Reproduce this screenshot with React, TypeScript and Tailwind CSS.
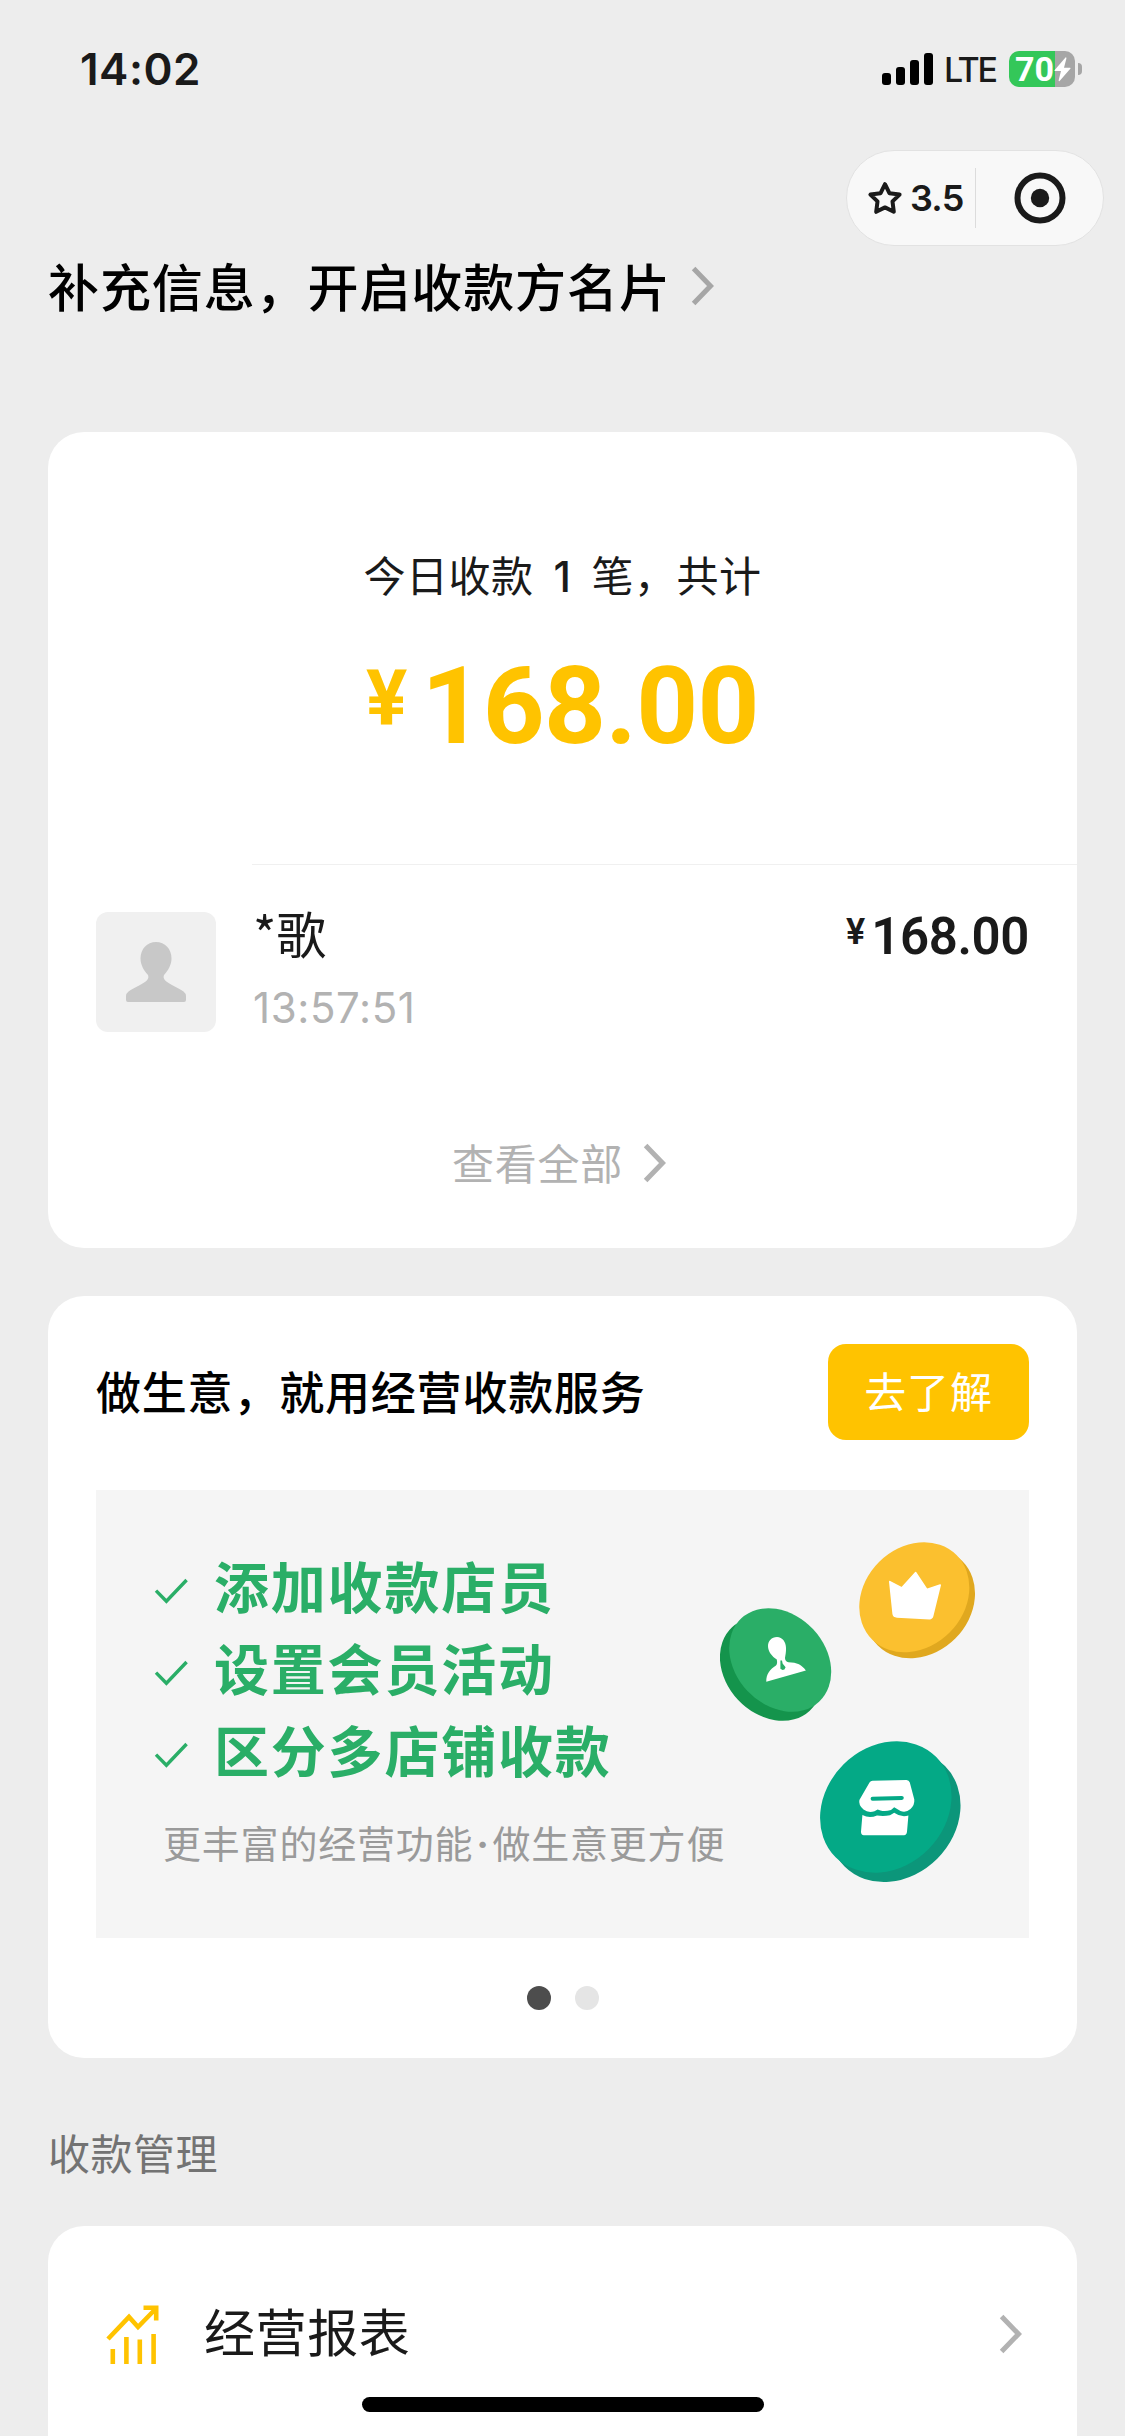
import React from 'react';
import clsx from 'clsx';

const FEATURES = ['添加收款店员', '设置会员活动', '区分多店铺收款'];

const Chevron: React.FC<{ className?: string }> = ({ className }) => (
  <svg viewBox="0 0 24 40" className={clsx('h-10 w-6 shrink-0', className)} fill="none" stroke="currentColor" strokeWidth="5">
    <path d="M2.6 2.6 L19.5 20 L2.6 37.4" />
  </svg>
);

const StatusBar: React.FC = () => (
  <div className="flex h-[138px] shrink-0 items-center justify-between pr-[43px] pl-20 font-['Inter',sans-serif]">
    <span className="text-[44px] leading-none font-semibold tracking-[0.5px]">14:02</span>

    <div className="flex items-center">
      <svg viewBox="0 0 52 32" className="h-8 w-[52px]">
        <rect x="0" y="20" width="9" height="12" rx="3" />
        <rect x="14" y="14" width="9" height="18" rx="3" />
        <rect x="28" y="7" width="9" height="25" rx="3" />
        <rect x="42" y="0" width="9" height="32" rx="3" />
      </svg>
      <span className="mt-0.5 ml-2.5 w-[65px] text-[34px] leading-none font-medium tracking-[-2.4px]">LTE</span>
      <div className="flex h-9 w-[66px] items-center rounded-[10px] bg-linear-to-r from-[#34c759] from-70% to-[#a6a6a6] to-70% pl-[6px] text-white">
        <span className="w-[39px] font-['Roboto',sans-serif] text-[34px] leading-9 font-bold">70</span>
        <svg viewBox="0 0 17 25" className="h-[25px] w-[17px] shrink-0" fill="currentColor">
          <path d="M11.5 0.5 L0.5 13.2 Q0.2 14 1 14 H7 L4.6 23.6 Q4.8 24.8 5.6 24 L16.5 11.6 Q16.8 10.8 16 10.8 H10 L12.4 1.4 Q12.4 0 11.5 0.5 Z" />
        </svg>
      </div>
      <div className="ml-[3px] h-3 w-1 rounded-r-full bg-[#a6a6a6]" />
    </div>
  </div>
);

const Capsule: React.FC = () => (
  <div className="mr-[21px] ml-auto flex h-24 w-[258px] items-center rounded-full border border-[#e2e2e2] bg-[#f8f8f8] text-[#1a1a1a]">
    <svg viewBox="0 0 36 34" className="ml-5 h-[34px] w-9" fill="none" stroke="currentColor" strokeWidth="4" strokeLinejoin="round">
      <path d="M18 3.2 L22.4 12.2 L32.6 13.6 L25.5 20.4 L26.8 30.8 L18 26.4 L9.2 30.8 L10.5 20.4 L3.4 13.6 L13.6 12.2 Z" />
    </svg>
    <span className="ml-[7px] w-[57px] font-['Inter',sans-serif] text-[36px] leading-none font-semibold tracking-[-0.8px]">3.5</span>
    <div className="ml-2 h-[60px] w-px bg-[#dcdcdc]" />
    <svg viewBox="0 0 52 52" className="ml-[38px] h-[52px] w-[52px]">
      <circle cx="26" cy="26" r="22.5" fill="none" stroke="currentColor" strokeWidth="6" />
      <circle cx="26" cy="26" r="9.2" fill="currentColor" />
    </svg>
  </div>
);

const Avatar: React.FC = () => (
  <div className="flex size-[120px] shrink-0 items-center justify-center rounded-[12px] bg-[#f0f0f0]">
    <svg viewBox="0 0 60 60" className="size-[60px]" fill="#c8c8c8">
      <path d="M30 0 C39 0 45.5 7 45.5 16.5 C45.5 23 42 28.5 38.4 32.5 Q36.6 35.2 38.8 38 C41 41 52 45.5 57.5 49.5 Q60 51.5 60 54 V58 Q60 60 58 60 H2 Q0 60 0 58 V54 Q0 51.5 2.5 49.5 C8 45.5 19 41 21.2 38 Q23.4 35.2 21.6 32.5 C18 28.5 14.5 23 14.5 16.5 C14.5 7 21 0 30 0 Z" />
    </svg>
  </div>
);

const TodayCard: React.FC = () => (
  <section className="flex h-[816px] shrink-0 flex-col rounded-[36px] bg-white pt-28">
    <p className="text-center text-[42px] leading-[60px] tracking-[0.5px]">
      今日收款<span className="mr-[10px] ml-[20px] font-['Inter',sans-serif] font-medium">1</span> 笔，共计
    </p>
    <p className="mt-[34px] flex h-[126px] items-start justify-center font-['Roboto',sans-serif] font-bold text-[#ffc300]">
      <span className="mt-[13px] text-[77px] leading-[90px]">¥</span>
      <span className="ml-3.5 text-[108px] leading-[130px] tracking-[-0.6px]">168.00</span>
    </p>

    <div className="mt-[97px] ml-[204px] h-px shrink-0 bg-[#f0f0f0]" />
    <div className="mt-[47px] flex px-12">
      <Avatar />
      <div className="ml-[37px] flex-1">
        <p className="-mt-[5px] h-[77px] text-[50px] leading-[50px]">*歌</p>
        <p className="font-['Inter',sans-serif] text-[42px] leading-[48px] tracking-[0.6px] text-[#b2b2b2]">13:57:51</p>
      </div>
      <p className="flex items-start font-['Roboto',sans-serif] font-semibold">
        <span className="mt-0.5 text-[36px] leading-[36px]">¥</span>
        <span className="ml-1.5 text-[51px] leading-[50px] tracking-[-0.4px]">168.00</span>
      </p>
    </div>

    <a href="#all" className="mt-[106px] mr-1.5 flex items-center justify-center text-[42px] leading-[60px] tracking-[0.8px] text-[#b2b2b2]">
      <span className="-mt-1.5">查看全部</span>
      <Chevron className="-mt-1 ml-5" />
    </a>
  </section>
);

const Coins: React.FC = () => (
  <svg viewBox="0 0 260 345" className="mt-[50px] h-[345px] w-[260px] shrink-0">
    {/* crown */}
    <ellipse cx="200" cy="63.2" rx="59.7" ry="49.9" transform="rotate(-45 200 63.2)" fill="#e0a81f" />
    <ellipse cx="194.3" cy="57.3" rx="59.7" ry="49.9" transform="rotate(-45 194.3 57.3)" fill="#fbc02f" />
    <path
      d="M169.8 41.6 L181.9 47.9 L195.7 32.6 L206.8 49.4 L220.2 45 L212.6 76 Q211.8 78.6 209.6 78.6 L177 77 Q173.6 76.8 173.2 74 Z"
      fill="#fff"
      stroke="#fff"
      strokeWidth="1.6"
      strokeLinejoin="round"
    />

    {/* clerk */}
    <ellipse cx="50.9" cy="129" rx="57" ry="45.1" transform="rotate(47 50.9 129)" fill="#14944c" />
    <ellipse cx="60.2" cy="120" rx="57" ry="45.1" transform="rotate(47 60.2 120)" fill="#2aae67" />
    <path
      d="M57 97 C62.5 97 66 102 66 108 C66.2 112 65.4 115 65 118 Q65 121.6 68.5 122.3 C77 122.4 82 125 85.9 130.6 L46.3 141.8 C46 134 50 129.6 56 125.6 Q57.6 124 56.8 119.5 C52 116.5 48 111.5 48 106 C48 101 51.5 97 57 97 Z"
      fill="#fff"
    />
    <path d="M60.4 120.4 L62 120.6 L62.6 123.4 L65.6 127.2 L64.4 129.6 L62.6 130 L60.4 128.8 Z" fill="#2aae67" />

    {/* shop */}
    <ellipse cx="174.8" cy="276.3" rx="71" ry="60" transform="rotate(-45 174.8 276.3)" fill="#0c967a" />
    <ellipse cx="165.8" cy="267" rx="71" ry="60" transform="rotate(-45 165.8 267)" fill="#04a986" />
    <path
      d="M152.5 240.8 L186.5 240 Q189 240.2 189.8 242.6 L194.3 259.5 Q194.8 265 190.5 269 Q186 273 180.5 271 L174.2 267.2 L171 270 Q165 271.6 160.5 270.4 L157.6 269.4 L154.5 271.2 Q148.5 273.4 143.5 269.6 Q138.2 264.8 139.4 260 L149.5 242.6 Q150.6 240.9 152.5 240.8 Z"
      fill="#fff"
    />
    <path d="M152.6 258.8 L181.8 257.9" stroke="#04a986" strokeWidth="4" strokeLinecap="round" />
    <path
      d="M142.4 275 Q149.5 279 157 275.4 Q163 276.4 170 275.3 L174.2 272.8 Q181.5 278 188.4 275.6 L187 291.8 Q186.6 295.2 184 295.2 H143.8 Q141 295.2 141 291.8 Z"
      fill="#fff"
    />
  </svg>
);

const ServiceCard: React.FC = () => (
  <section className="mt-12 h-[762px] shrink-0 rounded-[36px] bg-white px-12 pt-12">
    <div className="flex h-24 items-center justify-between">
      <h2 className="-mt-0.5 text-[45px] font-medium tracking-[0.8px] text-black">做生意，就用经营收款服务</h2>
      <button className="h-24 w-[201px] rounded-[18px] bg-[#ffc300] pb-1.5 text-[42px] tracking-[0.8px] text-white">去了解</button>
    </div>

    <div className="mt-[50px] flex h-[448px] bg-[#f5f5f5]">
      <div className="w-[624px] shrink-0 pt-[53px] pl-[58px]">
        <ul>
          {FEATURES.map(item => (
            <li key={item} className="flex h-[82px] items-center text-[55px] leading-[82px] font-bold tracking-[1.8px] whitespace-nowrap text-[#2aae67]">
              <svg viewBox="0 0 34 26" className="mt-3.5 mr-[26px] h-[26px] w-[34px]" fill="none" stroke="currentColor" strokeWidth="3.4">
                <path d="M2 12.6 L12.4 23.2 L32.6 2" />
              </svg>
              {item}
            </li>
          ))}
        </ul>
        <p className="mt-[23px] ml-[9px] text-[38px] leading-[60px] tracking-[0.8px] whitespace-nowrap text-[#9a9a9a]">
          更丰富的经营功能<span className="inline-block w-[19px] text-center font-['Inter',sans-serif] font-bold">·</span>做生意更方便
        </p>
      </div>
      <Coins />
    </div>

    <div className="mt-12 flex justify-center gap-6">
      <span className="size-6 rounded-full bg-[#4d4d4d]" />
      <span className="size-6 rounded-full bg-[#e5e5e5]" />
    </div>
  </section>
);

const ReportIcon: React.FC = () => (
  <svg viewBox="0 0 72 72" className="size-[72px]" fill="none" stroke="#ffc300" strokeWidth="4.6">
    <path d="M12 41 L33 19 L42 29 L60 10.5" />
    <path d="M47.5 9.8 H60.2 V22.5" />
    <path d="M16.8 51 V66 M30.4 39 V66 M43.8 41.5 V66 M57.6 36 V66" />
  </svg>
);

const App: React.FC = () => (
  <div className="relative flex h-[2436px] w-[1125px] flex-col overflow-hidden bg-[#ededed] font-['Noto_Sans_CJK_SC',sans-serif] text-[#1a1a1a]">
    <StatusBar />
    <div className="mt-3 shrink-0">
      <Capsule />
    </div>

    <h1 className="mt-2 ml-12 flex h-[70px] shrink-0 items-center text-[51px] leading-[64px] font-medium tracking-[0.9px] text-black">
      <span className="-mt-2">补充信息，开启收款方名片</span>
      <Chevron className="-mt-1.5 ml-5 text-[#a6a6a6]" />
    </h1>

    <main className="mt-[108px] flex shrink-0 flex-col px-12">
      <TodayCard />
      <ServiceCard />

      <h3 className="mt-16 h-[104px] shrink-0 text-[42px] leading-[60px] tracking-[0.5px] text-[#737373]">收款管理</h3>
      <section className="h-[300px] shrink-0 rounded-t-[36px] bg-white px-12">
        <a href="#report" className="flex h-[216px] items-center text-[51px] tracking-[0.6px]">
          <ReportIcon />
          <span className="-mt-2 ml-9">经营报表</span>
          <Chevron className="mr-1.5 ml-auto text-[#b2b2b2]" />
        </a>
      </section>
    </main>

    {/* home indicator */}
    <div className="absolute bottom-6 left-[362px] h-[15px] w-[402px] rounded-full bg-black" />
  </div>
);

export default App;
